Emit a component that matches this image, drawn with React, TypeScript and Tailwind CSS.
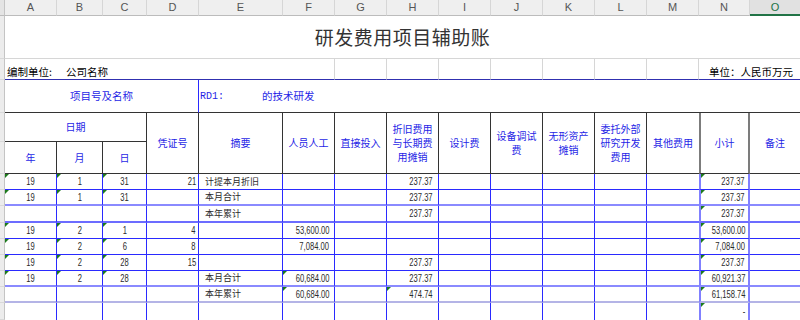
import React from "react";

const CJK = "font-['Noto_Sans_CJK_SC','Noto_Sans',sans-serif]";
const NUM = "font-['Liberation_Sans',Arial,sans-serif]";

const letters = ["A", "B", "C", "D", "E", "F", "G", "H", "I", "J", "K", "L", "M", "N"];

const strip = "bg-[#ececec] border-r border-r-[#c4c4c4] border-b border-b-[#d9d9d9]";

type RowDef = {
  cells: string[];
  tri: number[];
  bottom: string;
};

const rows: RowDef[] = [
  { cells: ["19", "1", "31", "21", "计提本月折旧", "", "", "237.37", "", "", "", "", "", "237.37", ""], tri: [0, 1, 2, 13], bottom: "border-b border-b-[#2a2aff]" },
  { cells: ["19", "1", "31", "", "本月合计", "", "", "237.37", "", "", "", "", "", "237.37", ""], tri: [0, 1, 2, 13], bottom: "border-b-2 border-b-[#8a8aff]" },
  { cells: ["", "", "", "", "本年累计", "", "", "237.37", "", "", "", "", "", "237.37", ""], tri: [13], bottom: "border-b-2 border-b-[#6c6cff]" },
  { cells: ["19", "2", "1", "4", "", "53,600.00", "", "", "", "", "", "", "", "53,600.00", ""], tri: [0, 1, 2, 13], bottom: "border-b border-b-[#2a2aff]" },
  { cells: ["19", "2", "6", "8", "", "7,084.00", "", "", "", "", "", "", "", "7,084.00", ""], tri: [0, 1, 2, 13], bottom: "border-b border-b-[#2a2aff]" },
  { cells: ["19", "2", "28", "15", "", "", "", "237.37", "", "", "", "", "", "237.37", ""], tri: [0, 1, 2, 13], bottom: "border-b border-b-[#2a2aff]" },
  { cells: ["19", "2", "28", "", "本月合计", "60,684.00", "", "237.37", "", "", "", "", "", "60,921.37", ""], tri: [0, 1, 2, 5, 13], bottom: "border-b-2 border-b-[#8a8aff]" },
  { cells: ["", "", "", "", "本年累计", "60,684.00", "", "474.74", "", "", "", "", "", "61,158.74", ""], tri: [5, 7, 13], bottom: "border-b-2 border-b-[#b4b4e6]" },
  { cells: ["", "", "", "", "", "", "", "", "", "", "", "", "", "-", ""], tri: [13], bottom: "" },
];

function colClass(i: number): string {
  if (i <= 2) return "justify-center border-r border-r-[#2a2aff]";
  if (i === 3) return "justify-end pr-[2px] border-r border-r-[#2a2aff]";
  if (i === 4) return "justify-start pl-[6px] border-r border-r-[#2a2aff]";
  if (i === 12) return "justify-end pr-[5px]";
  if (i === 13) return "justify-end pr-[3px] border-x-2 border-x-[#8080ff]";
  if (i === 14) return "justify-end pr-[5px]";
  return "justify-end pr-[5px] border-r border-r-[#2a2aff]";
}

function Tri() {
  return (
    <span className="absolute left-0 top-0 h-0 w-0 border-t-[4px] border-r-[4px] border-t-[#1c7a1c] border-r-transparent" />
  );
}

function Val({ text, ci }: { text: string; ci: number }) {
  if (!text) return null;
  if (ci === 4) {
    return <span className={"text-[9px] " + CJK}>{text}</span>;
  }
  const origin = ci <= 2 ? "origin-center" : "origin-right";
  return (
    <span className={"inline-block text-[10px] scale-x-[0.76] " + origin + " " + NUM}>{text}</span>
  );
}

const hdr =
  "flex items-center justify-center text-center text-[10px] leading-[14px] text-[#1f1fe6] border-b border-b-[#333] " + CJK;

export default function App() {
  return (
    <div className="w-[800px] h-[320px] overflow-hidden bg-white">
      <div className="grid grid-cols-[5px_52px_46px_44px_52px_84px_52px_52px_52px_52px_52px_52px_52px_52px_51px_50px] grid-rows-[16px_43px_21px_33px_29px_32px_16px_16px_17px_16px_16px_16px_16px_16px_17px]">
        {/* column letters */}
        <div className="bg-[#e4e4e4] border-r border-r-[#c4c4c4] border-b border-b-[#bcbcbc]" />
        {letters.map((l) => (
          <div
            key={l}
            className="flex items-center justify-center bg-[#efefef] text-[11px] text-[#555] border-r border-r-[#d6d6d6] border-b border-b-[#bcbcbc] font-['Liberation_Sans',Arial,sans-serif]"
          >
            {l}
          </div>
        ))}
        <div className="flex items-center justify-center bg-[#e1e1e1] text-[11px] text-[#217346] border-b-2 border-b-[#217346] font-['Liberation_Sans',Arial,sans-serif]">
          O
        </div>

        {/* title row */}
        <div className={strip} />
        <div className="col-span-15 flex items-center justify-center border-b border-b-[#d6d6d6]">
          <span className={"text-[19px] text-[#333] tracking-[0.5px] " + CJK}>研发费用项目辅助账</span>
        </div>

        {/* 编制单位 row */}
        <div className={strip} />
        <div className={"col-span-5 flex items-end pl-[2px] text-[10.5px] leading-[15px] text-black border-b border-b-[#3030b0] " + CJK}>
          <span>编制单位:</span>
          <span className="ml-[14px]">公司名称</span>
        </div>
        {[0, 1, 2, 3, 4, 5, 6, 7].map((i) => (
          <div key={i} className="border-r border-r-[#d6d6d6] border-b border-b-[#3030b0]" />
        ))}
        <div className={"col-span-2 flex items-end pl-[10px] text-[10.5px] leading-[15px] text-black border-b border-b-[#3030b0] whitespace-nowrap " + CJK}>
          单位：人民币万元
        </div>

        {/* 项目号 row */}
        <div className={strip} />
        <div className={"col-span-4 flex items-center justify-center text-[10.5px] text-[#1f1fe6] border-r border-r-[#2a2aff] border-b border-b-[#333] " + CJK}>
          项目号及名称
        </div>
        <div className="col-span-11 flex items-center border-b border-b-[#333] text-[#1f1fe6]">
          <span className="pl-[1px] text-[10px] font-['Liberation_Mono',monospace]">RD1:</span>
          <span className={"ml-[38px] text-[10.5px] " + CJK}>的技术研发</span>
        </div>

        {/* header row 1 */}
        <div className={strip} />
        <div className={"col-span-3 border-r border-r-[#333] " + hdr}>日期</div>
        <div className={"row-span-2 border-r border-r-[#333] " + hdr}>凭证号</div>
        <div className={"row-span-2 border-r border-r-[#333] " + hdr}>摘要</div>
        <div className={"row-span-2 border-r border-r-[#333] " + hdr}>人员人工</div>
        <div className={"row-span-2 border-r border-r-[#333] " + hdr}>直接投入</div>
        <div className={"row-span-2 border-r border-r-[#333] " + hdr}>
          折旧费用
          <br />
          与长期费
          <br />
          用摊销
        </div>
        <div className={"row-span-2 border-r border-r-[#333] " + hdr}>设计费</div>
        <div className={"row-span-2 border-r border-r-[#333] " + hdr}>
          设备调试
          <br />
          费
        </div>
        <div className={"row-span-2 border-r border-r-[#333] " + hdr}>
          无形资产
          <br />
          摊销
        </div>
        <div className={"row-span-2 border-r border-r-[#333] " + hdr}>
          委托外部
          <br />
          研究开发
          <br />
          费用
        </div>
        <div className={"row-span-2 " + hdr}>其他费用</div>
        <div className={"row-span-2 border-x-2 border-x-[#7c7c7c] " + hdr}>小计</div>
        <div className={"row-span-2 " + hdr}>备注</div>

        {/* header row 2 */}
        <div className={strip} />
        <div className={"border-r border-r-[#333] " + hdr}>年</div>
        <div className={"border-r border-r-[#333] " + hdr}>月</div>
        <div className={"border-r border-r-[#333] " + hdr}>日</div>

        {/* data rows */}
        {rows.map((r, ri) => (
          <React.Fragment key={ri}>
            <div className={strip} />
            {r.cells.map((c, ci) => (
              <div
                key={ci}
                className={
                  "relative flex items-center whitespace-nowrap text-[#2b2b2b] " +
                  colClass(ci) +
                  " " +
                  r.bottom
                }
              >
                {r.tri.includes(ci) && <Tri />}
                <Val text={c} ci={ci} />
              </div>
            ))}
          </React.Fragment>
        ))}
      </div>
    </div>
  );
}
